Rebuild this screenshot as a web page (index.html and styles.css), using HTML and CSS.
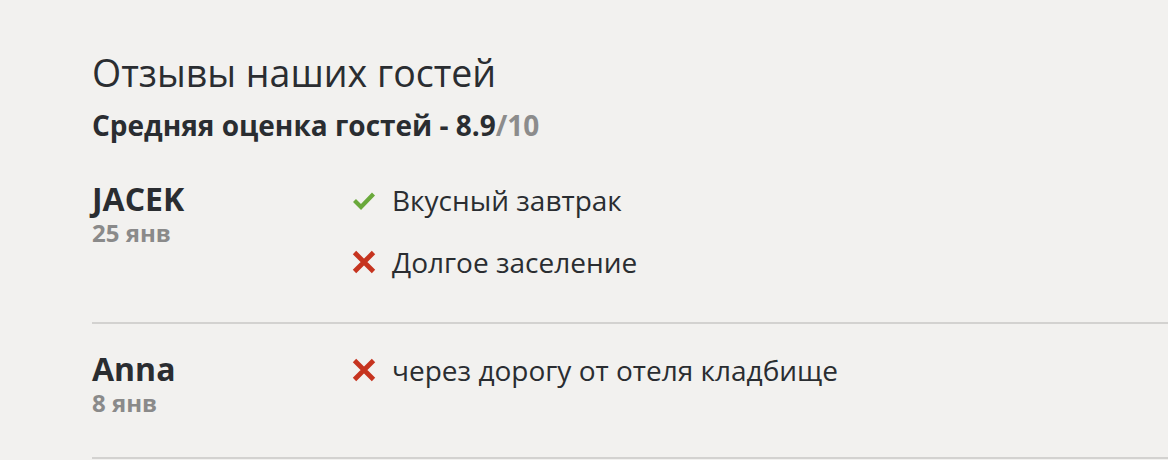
FILE: index.html
```html
<!DOCTYPE html>
<html lang="ru">
<head>
    <meta charset="UTF-8">
    <title>Отзывы</title>
    <link rel="stylesheet" href="styles.css">
</head>
<body>

<section class="reviews">
    <h2>Отзывы наших гостей</h2>
    <div class="average">Средняя оценка гостей - 8.9<span class="out-of">/10</span></div>

    <div class="review">
        <div class="author">
            <div class="name">JACEK</div>
            <div class="date">25 янв</div>
        </div>
        <ul class="points">
            <li>
                <svg class="icon" viewBox="0 0 24 24"><path d="M2.5 12.5l6.5 6.5L21.5 6" fill="none" stroke="#6aa93b" stroke-width="4.2"/></svg>
                Вкусный завтрак
            </li>
            <li>
                <svg class="icon" viewBox="0 0 24 24"><path d="M2.5 2.5L21.5 21.5M21.5 2.5L2.5 21.5" fill="none" stroke="#c6341f" stroke-width="4.8"/></svg>
                Долгое заселение
            </li>
        </ul>
    </div>

    <div class="review">
        <div class="author">
            <div class="name">Anna</div>
            <div class="date">8 янв</div>
        </div>
        <ul class="points">
            <li>
                <svg class="icon" viewBox="0 0 24 24"><path d="M2.5 2.5L21.5 21.5M21.5 2.5L2.5 21.5" fill="none" stroke="#c6341f" stroke-width="4.8"/></svg>
                через дорогу от отеля кладбище
            </li>
        </ul>
    </div>
</section>

</body>
</html>
```

FILE: styles.css
```css
body {
    margin: 0;
    background-color: #f2f1ef;
    font-family: "Open Sans", Arial, sans-serif;
    color: #2a2d31;
}
.reviews {
    padding: 48px 0 0 92px;
}
h2 {
    margin: 0;
    font-size: 37.5px;
    font-weight: 400;
    line-height: 50px;
}
.average {
    margin: 9px 0 37px;
    font-size: 28px;
    font-weight: 700;
    line-height: 36px;
}
.out-of {
    color: #8c8c8c;
}
.review {
    display: flex;
    border-bottom: 2px solid #d3d2d0;
    padding: 0 0 40px;
}
.review + .review {
    padding-top: 26px;
}
.author {
    width: 260px;
}
.name {
    font-size: 32px;
    font-weight: 700;
    line-height: 40px;
    margin-top: -1px;
}
.date {
    font-size: 24px;
    font-weight: 700;
    color: #8a8a8a;
    line-height: 28px;
}
.points {
    list-style: none;
    margin: 0;
    padding: 0;
}
.points li {
    display: flex;
    align-items: center;
    font-size: 28px;
    line-height: 40px;
    margin-bottom: 22px;
}
.points li:last-child {
    margin-bottom: 0;
}
.icon {
    width: 24px;
    height: 24px;
    margin-right: 16px;
}
```
